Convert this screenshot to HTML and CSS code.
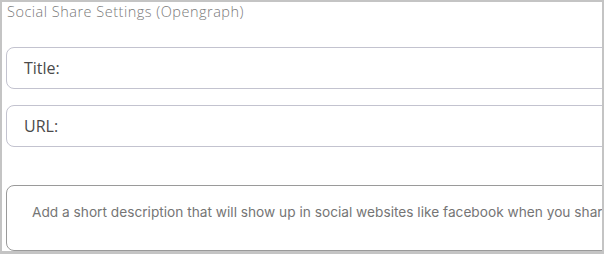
FILE: index.html
```html
<!DOCTYPE html>
<html>
<head>
<meta charset="utf-8">
<link rel="stylesheet" href="styles.css">
</head>
<body>
<div class="frame">
  <div class="heading">Social Share Settings (Opengraph)</div>
  <div class="field field-title"><span class="placeholder">Title:</span></div>
  <div class="field field-url"><span class="placeholder">URL:</span></div>
  <div class="area"><span class="area-text">Add a short description that will show up in social websites like facebook when you share</span></div>
</div>
</body>
</html>
```
FILE: styles.css
```css
html, body {
  margin: 0;
  padding: 0;
  background: #ffffff;
}
.frame {
  box-sizing: border-box;
  width: 604px;
  height: 254px;
  border: 2px solid #c4c4c4;
  border-bottom-width: 3px;
  overflow: hidden;
  background: #fff;
  display: flex;
  flex-direction: column;
}
.heading {
  font-family: "Open Sans", sans-serif;
  font-weight: 300;
  font-size: 14.5px;
  letter-spacing: 0.5px;
  line-height: 20px;
  color: #7a7a7a;
  padding-left: 5px;
  height: 20px;
  white-space: nowrap;
}
.field {
  box-sizing: border-box;
  margin-left: 4px;
  width: 640px;
  flex: none;
  height: 42px;
  border: 1px solid #c3c3cf;
  border-radius: 8px;
  padding-left: 17px;
  display: flex;
  align-items: center;
}
.field-title { margin-top: 25px; }
.field-url { margin-top: 16px; }
.placeholder {
  font-family: "Open Sans", sans-serif;
  font-size: 16px;
  color: #4a4a4a;
}
.area {
  box-sizing: border-box;
  margin-left: 4px;
  margin-top: 38px;
  width: 640px;
  flex: none;
  height: 66px;
  border: 1px solid #9a9a9a;
  border-radius: 8px;
  padding-left: 25px;
  padding-top: 17px;
}
.area-text {
  font-family: "Inter", sans-serif;
  font-size: 13.7px;
  line-height: 18px;
  color: #757575;
  white-space: nowrap;
}
```
